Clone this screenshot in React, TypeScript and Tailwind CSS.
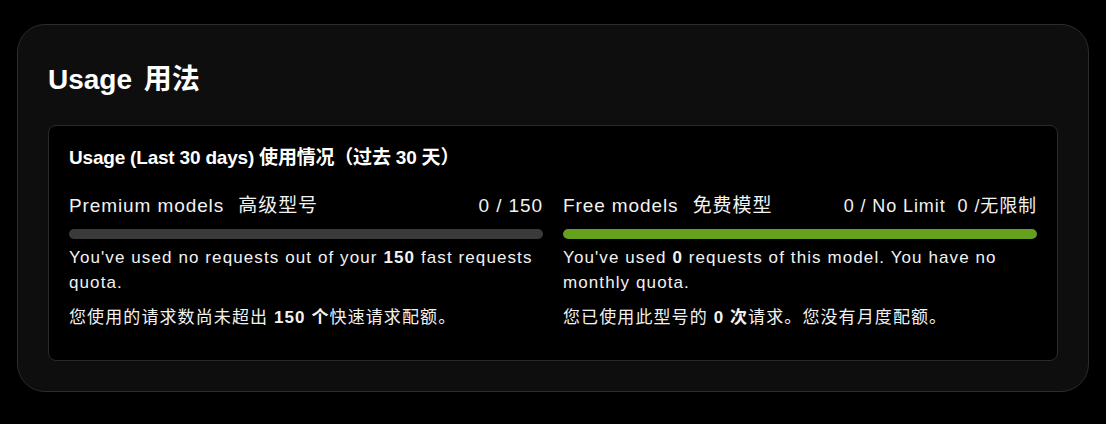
const FONT = "font-['Liberation_Sans','Noto_Sans_CJK_SC',sans-serif]";

function UsageBar({ percent, color }: { percent: number; color: string }) {
  return (
    <div className="mt-[9px] h-[10px] w-full overflow-hidden rounded-full bg-[#3a3a3a]">
      <div className={`h-full rounded-full ${color}`} style={{ width: `${percent}%` }} />
    </div>
  );
}

export default function App() {
  return (
    <div className={`${FONT} min-h-screen bg-black px-[17px] pt-6 pb-8 text-[#f2f2f2]`}>
      <section className="rounded-[28px] border border-[#2c2c2c] bg-[#0e0e0e] p-[30px]">
        <h1 className="text-[28px] leading-[50px] font-bold text-white">
          Usage <span className="ml-1">用法</span>
        </h1>

        <div className="mt-5 rounded-lg border border-[#2a2a2a] bg-black px-5 pt-5 pb-[30px]">
          <h2 className="text-[19px] leading-6 font-bold tracking-[-0.2px] text-white">
            Usage (Last 30 days) 使用情况（过去 30 天）
          </h2>

          <div className="mt-[22px] grid grid-cols-2 gap-5">
            <div>
              <div className="flex items-center justify-between text-[19px] leading-7 tracking-[0.9px]">
                <span>
                  Premium models <span className="ml-2">高级型号</span>
                </span>
                <span>0 / 150</span>
              </div>
              <UsageBar percent={0} color="bg-[#65a11c]" />
              <p className="mt-[6px] text-[17px] leading-[25px] tracking-[1.1px]">
                You've used no requests out of your <b>150</b> fast requests quota.
              </p>
              <p className="mt-[10px] text-[17px] leading-[25px] tracking-[1.1px]">
                您使用的请求数尚未超出 <b>150 个</b>快速请求配额。
              </p>
            </div>

            <div>
              <div className="flex items-center justify-between text-[19px] leading-7 tracking-[0.9px]">
                <span>
                  Free models <span className="ml-2">免费模型</span>
                </span>
                <span className="flex gap-3 text-[18px]">
                  <span>0 / No Limit</span>
                  <span>0 /无限制</span>
                </span>
              </div>
              <UsageBar percent={100} color="bg-[#65a11c]" />
              <p className="mt-[6px] text-[17px] leading-[25px] tracking-[1.1px]">
                You've used <b>0</b> requests of this model. You have no monthly quota.
              </p>
              <p className="mt-[10px] text-[17px] leading-[25px] tracking-[1.1px]">
                您已使用此型号的 <b>0 次</b>请求。您没有月度配额。
              </p>
            </div>
          </div>
        </div>
      </section>
    </div>
  );
}
